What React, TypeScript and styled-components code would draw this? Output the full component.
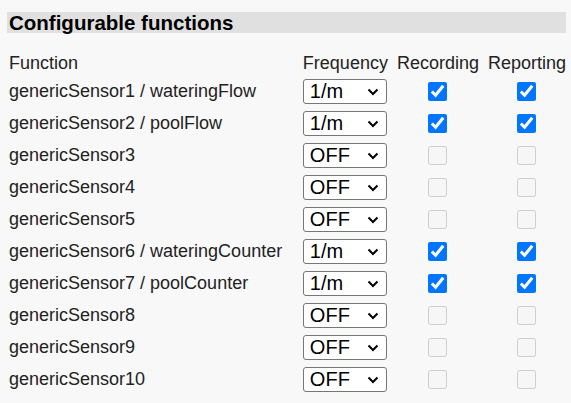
import React, { useState } from 'react';
import styled, { createGlobalStyle } from 'styled-components';

const GlobalStyle = createGlobalStyle`
    html, body {
        margin: 0;
        background: #f8f8f8;
    }
    body {
        padding: 12px 5px 0 7px;
        font-family: "Liberation Sans", Arial, sans-serif;
        font-size: 18px;
        color: #222;
    }
`;

const SectionTitle = styled.h3`
    margin: 0;
    background: #e0e0e0;
    font-size: 20.5px;
    font-weight: bold;
    line-height: 21px;
    padding: 0 2px;
    color: #000;
`;

const Table = styled.table`
    margin: 18px 0 0 2px;
    border-spacing: 0;
    font-size: 18px;
`;

const HeadCell = styled.th<{ $align?: string; $pad?: number; $w?: number }>`
    font-weight: normal;
    text-align: ${(p) => p.$align || 'left'};
    padding: 0 0 0 ${(p) => p.$pad || 0}px;
    width: ${(p) => (p.$w ? `${p.$w}px` : 'auto')};
    height: 24px;
    white-space: nowrap;
`;

const Cell = styled.td<{ $center?: boolean; $pad?: number }>`
    padding: 0 0 0 ${(p) => p.$pad || 0}px;
    height: 32px;
    text-align: ${(p) => (p.$center ? 'center' : 'left')};
    vertical-align: middle;
    white-space: nowrap;
`;

const SelectWrap = styled.div`
    position: relative;
    width: 84px;
    height: 25px;
`;

const Select = styled.select`
    appearance: none;
    display: block;
    width: 84px;
    height: 25px;
    font-family: "Liberation Sans", Arial, sans-serif;
    font-size: 20px;
    border: 1px solid #767676;
    border-radius: 3px;
    background: #fff;
    color: #000;
    padding: 0 0 0 6px;
    line-height: 23px;
`;

const Chevron = styled.svg`
    position: absolute;
    right: 8px;
    top: 9px;
    pointer-events: none;
`;

const Check = styled.input`
    width: 19px;
    height: 19px;
    margin: 0;
    vertical-align: middle;
`;

type Row = { name: string; freq: string };

const rows: Row[] = [
    { name: 'genericSensor1 / wateringFlow', freq: '1/m' },
    { name: 'genericSensor2 / poolFlow', freq: '1/m' },
    { name: 'genericSensor3', freq: 'OFF' },
    { name: 'genericSensor4', freq: 'OFF' },
    { name: 'genericSensor5', freq: 'OFF' },
    { name: 'genericSensor6 / wateringCounter', freq: '1/m' },
    { name: 'genericSensor7 / poolCounter', freq: '1/m' },
    { name: 'genericSensor8', freq: 'OFF' },
    { name: 'genericSensor9', freq: 'OFF' },
    { name: 'genericSensor10', freq: 'OFF' },
];

const FunctionRow: React.FC<{ row: Row }> = ({ row }) => {
    const [freq, setFreq] = useState(row.freq);
    const on = freq !== 'OFF';
    return (
        <tr>
            <Cell>{row.name}</Cell>
            <Cell>
                <SelectWrap>
                    <Select value={freq} onChange={(e) => setFreq(e.target.value)}>
                        <option>OFF</option>
                        <option>1/m</option>
                        <option>5/m</option>
                        <option>15/m</option>
                    </Select>
                    <Chevron width="12" height="8" viewBox="0 0 12 8">
                        <path d="M1.5 1.5 L6 6 L10.5 1.5" fill="none" stroke="#000" strokeWidth="2" />
                    </Chevron>
                </SelectWrap>
            </Cell>
            <Cell $center $pad={9}>
                <Check type="checkbox" checked={on} disabled={!on} readOnly />
            </Cell>
            <Cell $center $pad={9}>
                <Check type="checkbox" checked={on} disabled={!on} readOnly />
            </Cell>
        </tr>
    );
};

export default function App() {
    return (
        <>
            <GlobalStyle />
            <SectionTitle>Configurable functions</SectionTitle>
            <Table>
                <thead>
                    <tr>
                        <HeadCell $w={294}>Function</HeadCell>
                        <HeadCell $w={84}>Frequency</HeadCell>
                        <HeadCell $align="center" $pad={9}>Recording</HeadCell>
                        <HeadCell $align="center" $pad={9}>Reporting</HeadCell>
                    </tr>
                </thead>
                <tbody>
                    {rows.map((r) => (
                        <FunctionRow key={r.name} row={r} />
                    ))}
                </tbody>
            </Table>
        </>
    );
}
